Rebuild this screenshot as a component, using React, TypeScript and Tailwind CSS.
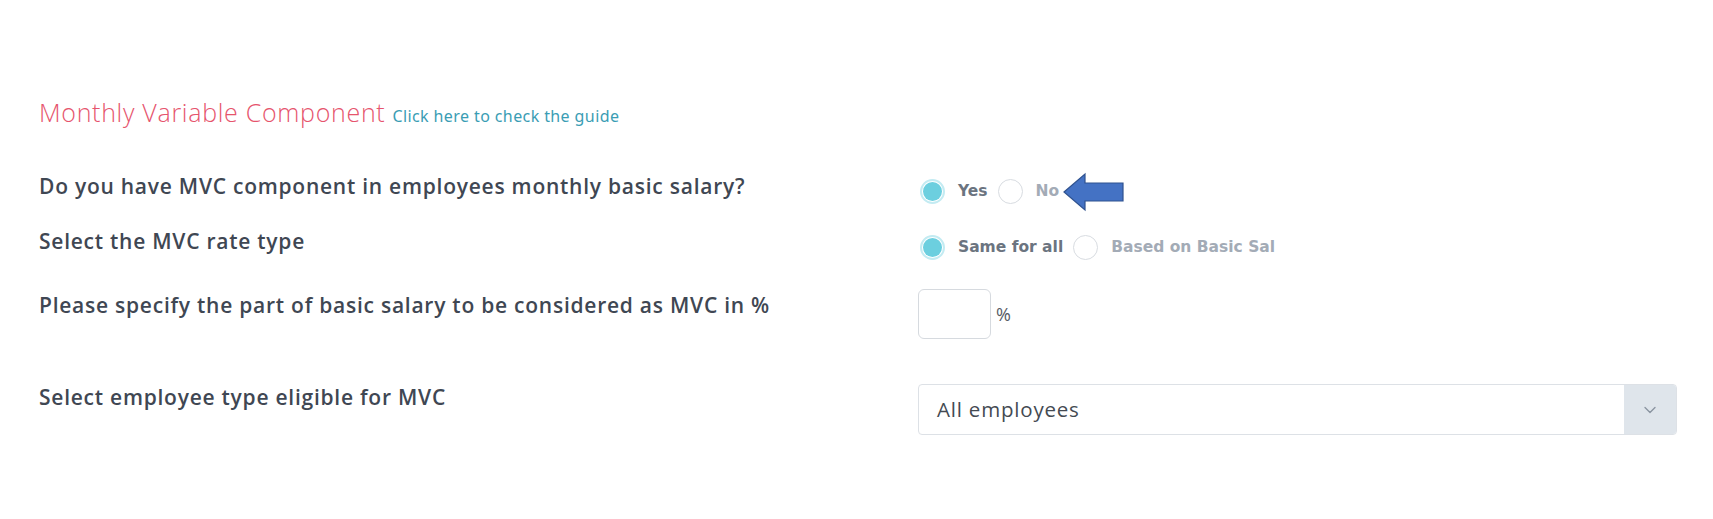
import { ChevronDown } from "lucide-react";

const labelFont = { fontFamily: '"Open Sans", "Liberation Sans", sans-serif' };

function Radio({ checked, label }: { checked?: boolean; label: string }) {
  return (
    <label className="flex items-center gap-[13px]">
      {checked ? (
        <span className="flex h-[25px] w-[25px] items-center justify-center rounded-full border-[2px] border-[#c3ebf2] bg-white">
          <span className="h-[19px] w-[19px] rounded-full bg-[#6ccfdf]" />
        </span>
      ) : (
        <span className="h-[25px] w-[25px] rounded-full border-[1.5px] border-[#d8dce1] bg-white" />
      )}
      <span
        className={`text-[15.5px] font-bold ${checked ? "text-[#6b7480]" : "text-[#a3abb6]"}`}
        style={{ fontFamily: '"DejaVu Sans", Verdana, sans-serif' }}
      >
        {label}
      </span>
    </label>
  );
}

function BlueArrow() {
  return (
    <svg width="64" height="40" viewBox="0 0 64 40" className="-my-[8px] ml-[3px]">
      <path d="M2 20 L23 2 L23 11 L61 11 L61 29 L23 29 L23 38 Z" fill="#4472c4" stroke="#2f528f" strokeWidth="1.2" />
    </svg>
  );
}

function Row({ label, children, className }: { label: string; children: React.ReactNode; className?: string }) {
  return (
    <div className={`flex items-start ${className ?? ""}`}>
      <div className="w-[879px] text-[21px] font-semibold leading-[28px] tracking-[0.75px] text-[#3f4753]" style={labelFont}>
        {label}
      </div>
      <div className="flex-1">{children}</div>
    </div>
  );
}

export default function App() {
  return (
    <div className="min-h-[519px] w-[1713px] bg-white pl-[39px] pr-[36px] pt-[96px]">
      <div className="flex items-baseline gap-[7px] leading-[32px]">
        <span className="text-[25px] font-light tracking-[0.7px] text-[#e6546d]" style={{ fontFamily: '"Open Sans", sans-serif' }}>
          Monthly Variable Component
        </span>
        <span className="text-[16px] tracking-[0.4px] text-[#3a9db4]" style={{ fontFamily: '"Noto Sans", sans-serif' }}>
          Click here to check the guide
        </span>
      </div>

      <Row label="Do you have MVC component in employees monthly basic salary?" className="mt-[40px] h-[55px]">
        <div className="ml-[2px] mt-[7px] flex items-center gap-[10px]">
          <Radio checked label="Yes" />
          <div className="flex items-center">
            <Radio label="No" />
            <BlueArrow />
          </div>
        </div>
      </Row>

      <Row label="Select the MVC rate type" className="h-[64px]">
        <div className="ml-[2px] mt-[8px] flex items-center gap-[10px]">
          <Radio checked label="Same for all" />
          <Radio label="Based on Basic Sal" />
        </div>
      </Row>

      <Row label="Please specify the part of basic salary to be considered as MVC in %" className="h-[92px]">
        <div className="-mt-[2px] flex items-center gap-[5px]">
          <input className="h-[50px] w-[73px] rounded-[6px] border border-[#d6dadf] bg-white outline-none" />
          <span className="text-[18px] text-[#555b63]" style={labelFont}>
            %
          </span>
        </div>
      </Row>

      <Row label="Select employee type eligible for MVC">
        <div className="mt-[1px] flex h-[51px] items-stretch overflow-hidden rounded-[4px] border border-[#dde1e6] bg-white">
          <div className="flex flex-1 items-center pl-[18px] text-[20.5px] tracking-[0.8px] text-[#444a52]" style={labelFont}>
            All employees
          </div>
          <div className="flex w-[52px] items-center justify-center bg-[#dfe5eb]">
            <ChevronDown className="h-[20px] w-[24px] text-[#8a94a0]" strokeWidth={1.6} />
          </div>
        </div>
      </Row>
    </div>
  );
}
